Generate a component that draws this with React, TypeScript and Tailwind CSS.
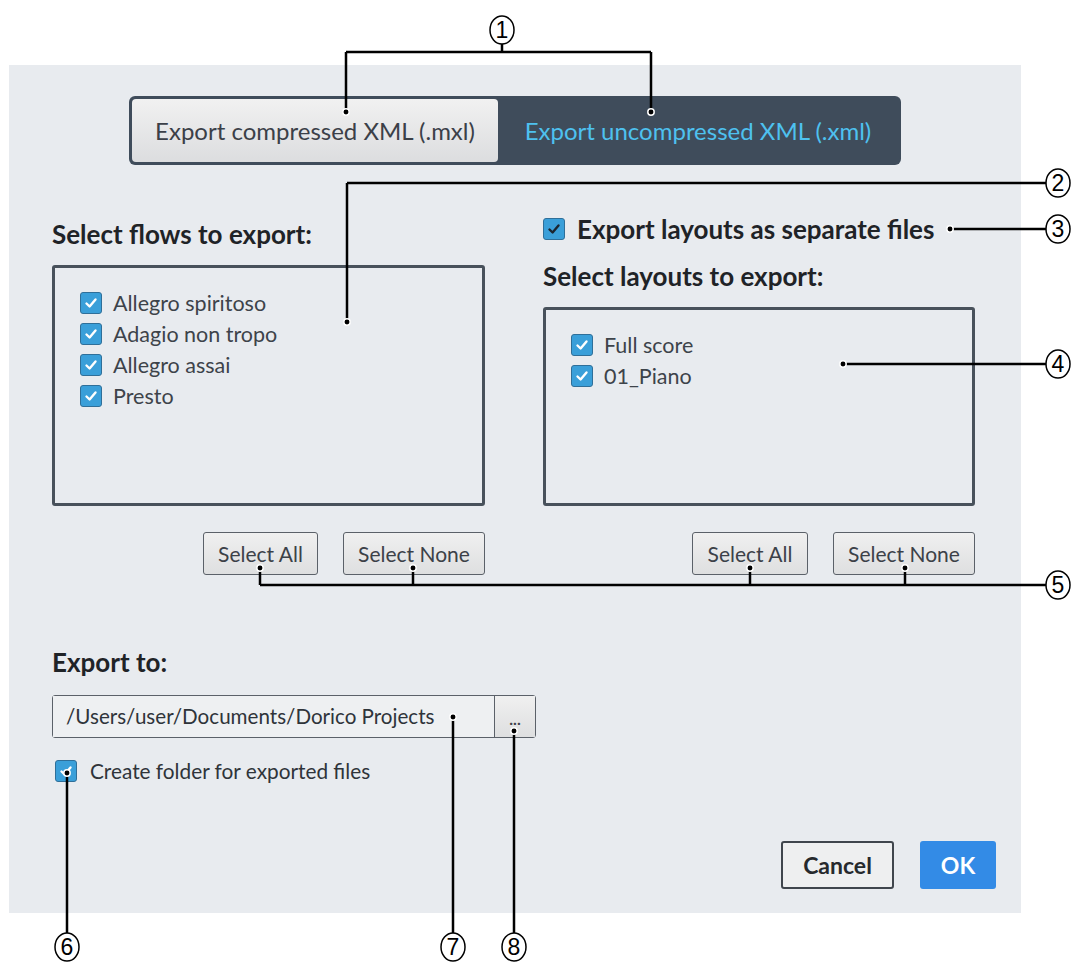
import React from 'react'

const FONT = { fontFamily: 'Lato, "Open Sans", sans-serif' }

const FLOWS = ['Allegro spiritoso', 'Adagio non tropo', 'Allegro assai', 'Presto']
const LAYOUTS = ['Full score', '01_Piano']

function Check({ dark = false }: { dark?: boolean }) {
  return (
    <span className="flex h-[22px] w-[22px] shrink-0 items-center justify-center rounded-[3px] border border-[#2f6f99] bg-[#3a9fd9]">
      <svg width="14" height="14" viewBox="0 0 14 14">
        <path
          d="M2.5 7.5 L5.6 10.5 L11.5 3.5"
          fill="none"
          stroke={dark ? '#1b2530' : '#ffffff'}
          strokeWidth="2.4"
          strokeLinecap="round"
          strokeLinejoin="round"
        />
      </svg>
    </span>
  )
}

function ListBox({ items, height }: { items: string[]; height: string }) {
  return (
    <div className={`${height} w-full rounded-[3px] border-[3px] border-[#48515b] px-[25px] pt-[24px]`}>
      <div className="flex flex-col gap-[9px]">
        {items.map((item) => (
          <label key={item} className="flex h-[22px] items-center gap-[11px] text-[21.5px] text-[#3d434a]">
            <Check />
            {item}
          </label>
        ))}
      </div>
    </div>
  )
}

function SmallButton({ label, width }: { label: string; width: string }) {
  return (
    <button className={`${width} h-[43px] rounded-[3px] border-[1.5px] border-[#5b6169] bg-gradient-to-b from-[#f0f0f0] to-[#dedfe0] text-[21px] text-[#3c4148]`}>
      {label}
    </button>
  )
}

function Dot({ x, y }: { x: number; y: number }) {
  return <circle cx={x} cy={y} r="3.2" fill="#000" stroke="#fff" strokeWidth="1.5" />
}

function Num({ x, y, n }: { x: number; y: number; n: number }) {
  return (
    <g>
      <ellipse cx={x} cy={y} rx="12" ry="14" fill="#fff" stroke="#000" strokeWidth="1.5" />
      <text
        x={x}
        y={y + 8}
        textAnchor="middle"
        fontSize="23"
        fontFamily='"Liberation Sans", Arial, sans-serif'
        fill="#000"
      >
        {n}
      </text>
    </g>
  )
}

function Callouts() {
  const L = { stroke: '#000', strokeWidth: 2.5, fill: 'none' }
  return (
    <svg className="pointer-events-none absolute left-0 top-0" width="1072" height="965">
      {/* 1 */}
      <path d="M502 44 V52 M346 52 H651 M346 52 V112 M651 52 V112" {...L} />
      <Dot x={346} y={112} />
      <Dot x={651} y={112} />
      <Num x={502} y={30} n={1} />
      {/* 2 */}
      <path d="M347 183 H1046 M347 183 V322" {...L} />
      <Dot x={347} y={322} />
      <Num x={1058} y={183} n={2} />
      {/* 3 */}
      <path d="M950 229 H1046" {...L} />
      <Dot x={950} y={229} />
      <Num x={1058} y={229} n={3} />
      {/* 4 */}
      <path d="M843 364 H1046" {...L} />
      <Dot x={843} y={364} />
      <Num x={1058} y={364} n={4} />
      {/* 5 */}
      <path d="M260 585 H1046 M260 568 V585 M413 568 V585 M750 568 V585 M905 568 V585" {...L} />
      <Dot x={260} y={568} />
      <Dot x={413} y={568} />
      <Dot x={750} y={568} />
      <Dot x={905} y={568} />
      <Num x={1058} y={585} n={5} />
      {/* 6 7 8 */}
      <path d="M67 773 V934 M453 717 V934 M514 731 V934" {...L} />
      <Dot x={67} y={773} />
      <Dot x={453} y={717} />
      <Dot x={514} y={731} />
      <Num x={67} y={947} n={6} />
      <Num x={453} y={947} n={7} />
      <Num x={514} y={947} n={8} />
    </svg>
  )
}

export default function App() {
  return (
    <div className="relative h-[965px] w-[1072px] overflow-hidden bg-white pl-[9px] pt-[65px]" style={FONT}>
      <div className="flex h-[848px] w-[1012px] flex-col bg-[#e8ebef] px-[43px] pt-[31px]">
        {/* format switch */}
        <div className="mx-auto flex h-[69px] w-[772px] rounded-[6px] bg-[#3f4c5b] p-[3px]">
          <div className="flex w-[366px] items-center justify-center rounded-[4px] bg-gradient-to-b from-[#f1f1f1] to-[#dcdddf] text-[24px] text-[#3b4048]">
            Export compressed XML (.mxl)
          </div>
          <div className="flex flex-1 items-center justify-center text-[24px] text-[#4ec1ef]">
            Export uncompressed XML (.xml)
          </div>
        </div>

        {/* flows and layouts */}
        <div className="mt-[49px] grid grid-cols-[433px_432px] items-end gap-[58px]">
          <div className="flex flex-col">
            <h2 className="mb-[17px] text-[26px] font-bold leading-[28px] text-[#1f2327]">Select flows to export:</h2>
            <ListBox items={FLOWS} height="h-[241px]" />
          </div>
          <div className="flex flex-col">
            <label className="flex h-[30px] items-center gap-[12px] text-[26px] font-bold text-[#1f2327]">
              <Check dark />
              Export layouts as separate files
            </label>
            <h2 className="mb-[17px] mt-[18px] text-[26px] font-bold leading-[28px] text-[#1f2327]">Select layouts to export:</h2>
            <ListBox items={LAYOUTS} height="h-[199px]" />
          </div>
        </div>

        <div className="mt-[26px] grid grid-cols-[433px_432px] gap-[58px]">
          <div className="flex justify-end gap-[25px]">
            <SmallButton label="Select All" width="w-[115px]" />
            <SmallButton label="Select None" width="w-[142px]" />
          </div>
          <div className="flex justify-end gap-[25px]">
            <SmallButton label="Select All" width="w-[116px]" />
            <SmallButton label="Select None" width="w-[142px]" />
          </div>
        </div>

        {/* export destination */}
        <h2 className="mt-[73px] text-[26px] font-bold leading-[28px] text-[#1f2327]">Export to:</h2>
        <div className="mt-[19px] flex h-[43px] w-[484px] rounded-[3px] border-[1.5px] border-[#5b6169]">
          <div className="flex flex-1 items-center bg-[#eef0f2] pl-[13px] text-[20.6px] text-[#2f343a]">
            /Users/user/Documents/Dorico Projects
          </div>
          <div className="flex w-[41px] items-end justify-center border-l-[1.5px] border-[#5b6169] bg-gradient-to-b from-[#f0f0f0] to-[#dedfe0] pb-[10px] text-[16px] font-bold leading-none text-[#3c4148]">
            ...
          </div>
        </div>
        <label className="ml-[3px] mt-[21px] flex h-[24px] items-center gap-[13px] text-[20.8px] text-[#2f343a]">
          <Check />
          Create folder for exported files
        </label>

        {/* actions */}
        <div className="mt-auto mb-[24px] flex justify-end gap-[26px]">
          <button className="h-[48px] w-[113px] rounded-[3px] border-2 border-[#40464d] bg-[#eeeff0] text-[23px] font-bold text-[#26292d]">
            Cancel
          </button>
          <button className="-mr-[18px] h-[48px] w-[76px] rounded-[3px] bg-[#338be6] text-[23px] font-bold text-white">
            OK
          </button>
        </div>
      </div>
      <Callouts />
    </div>
  )
}
